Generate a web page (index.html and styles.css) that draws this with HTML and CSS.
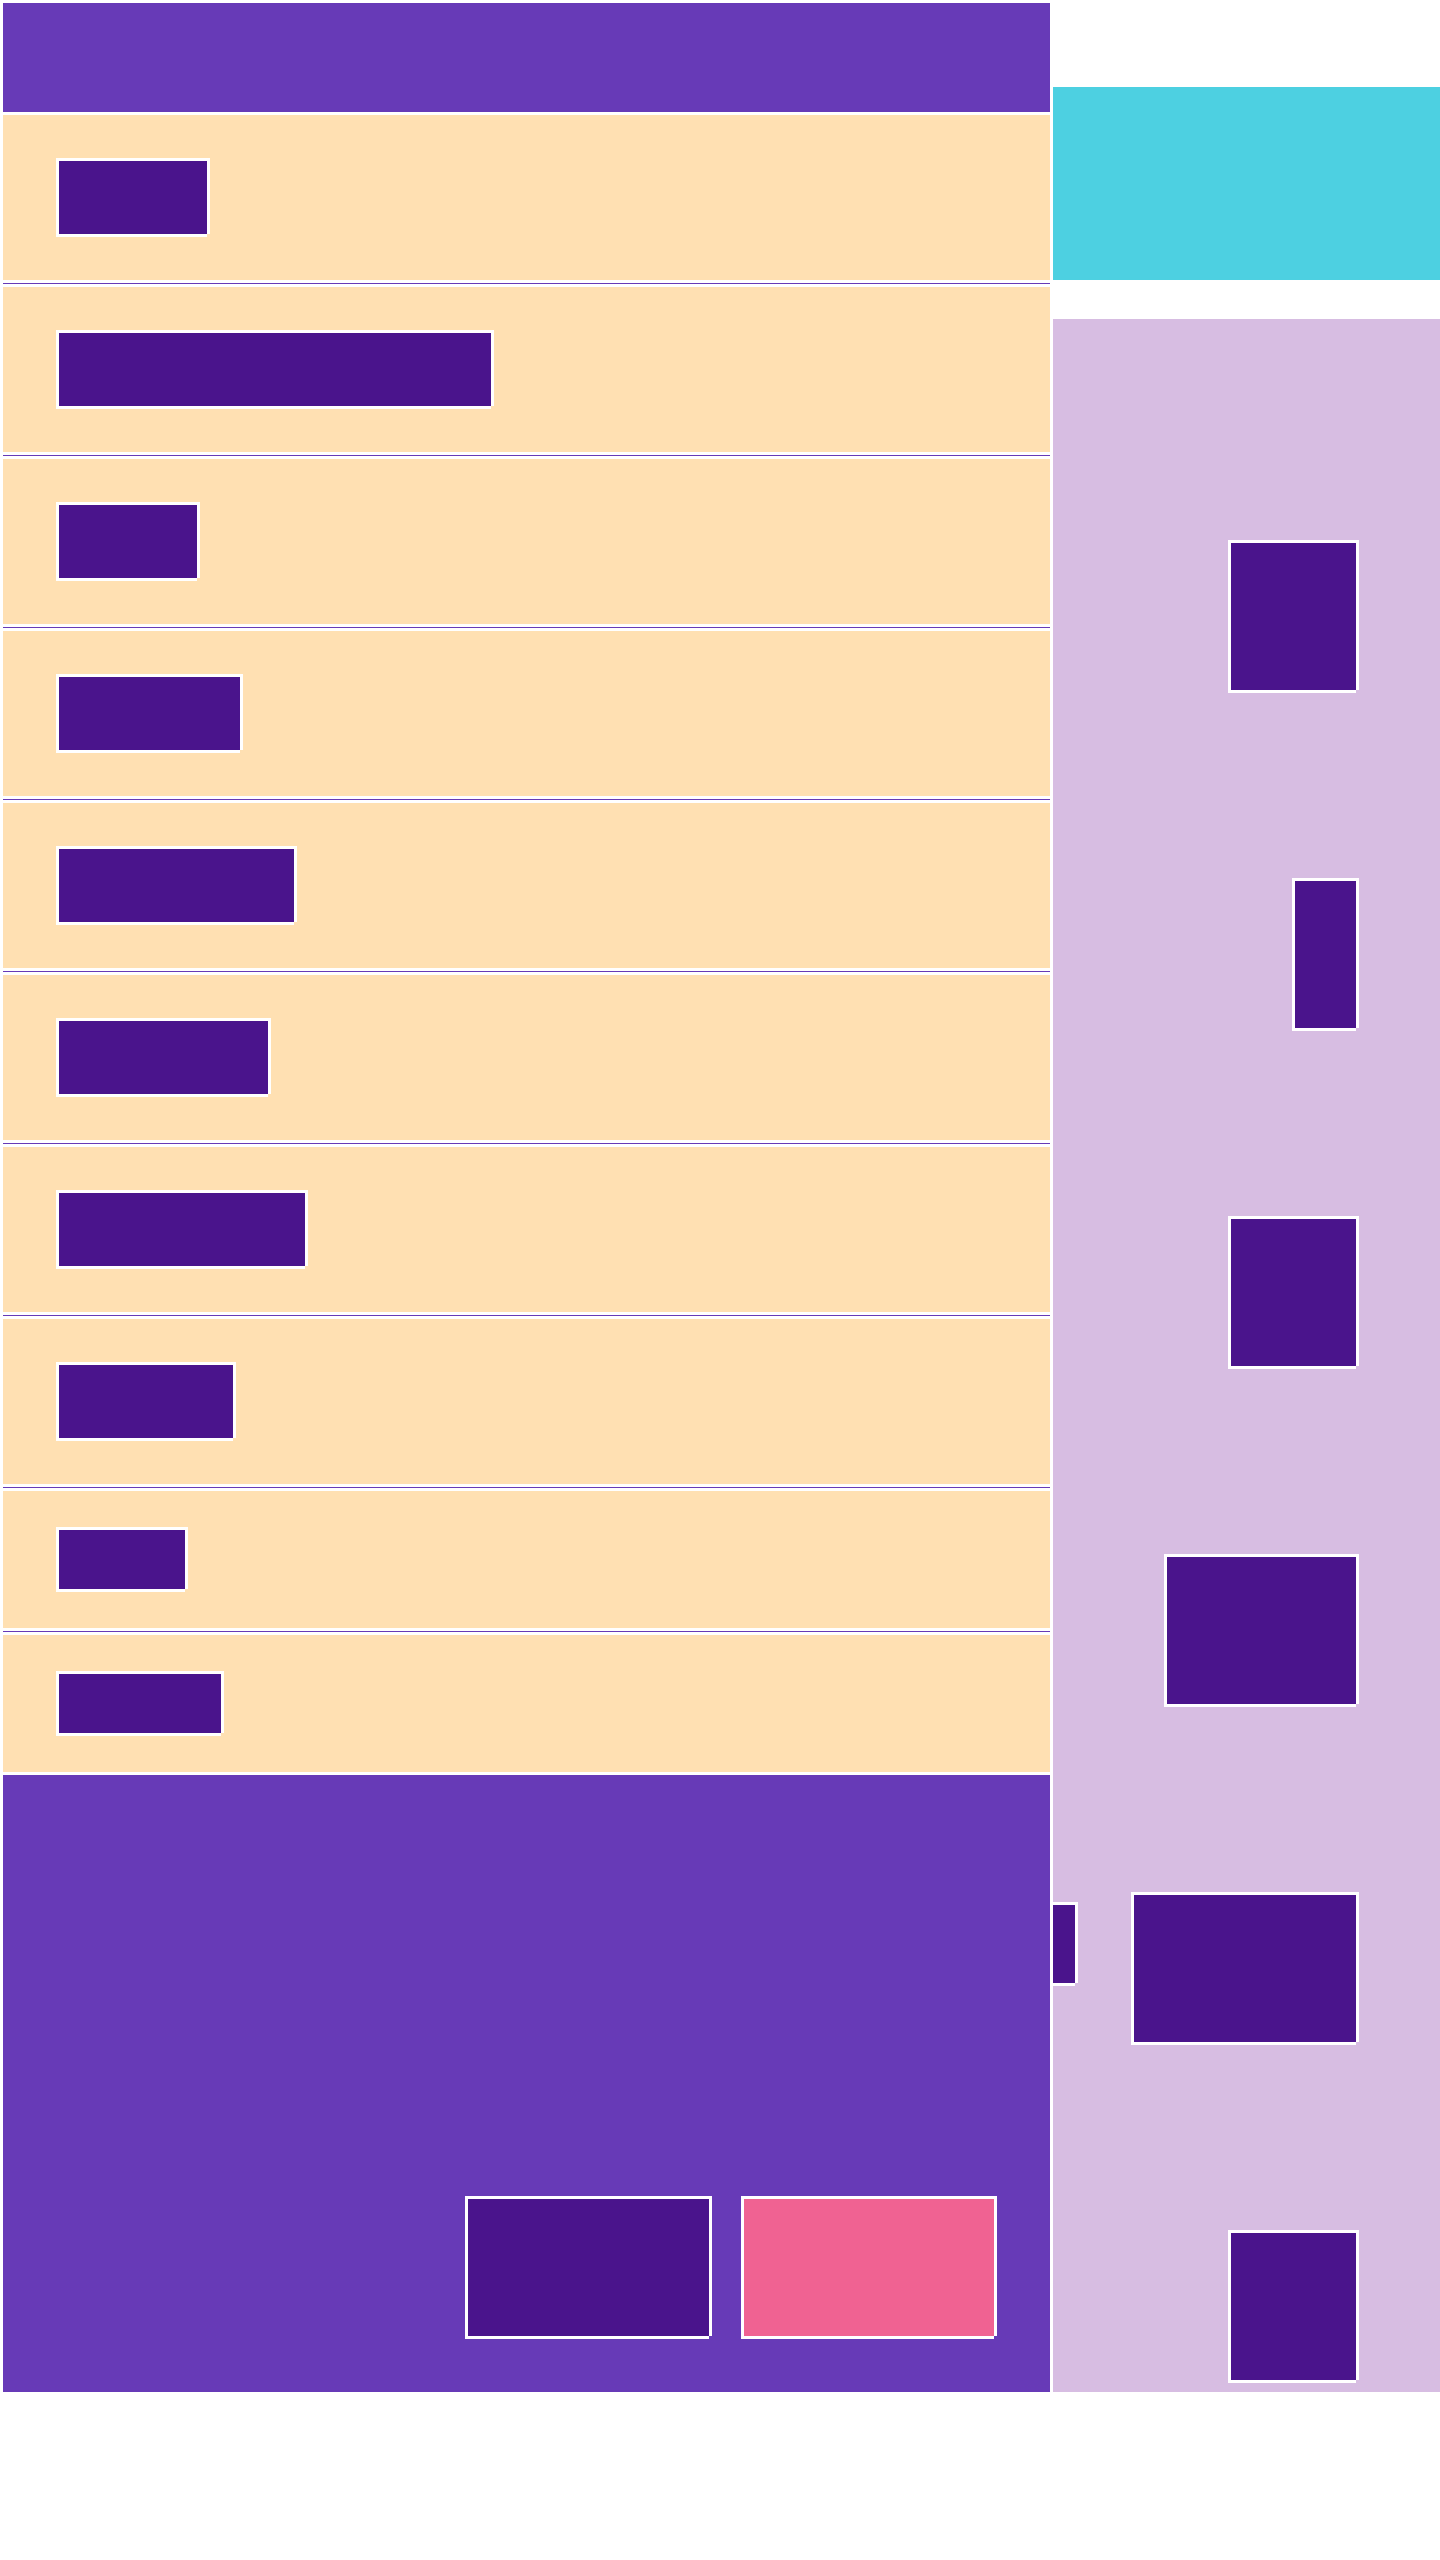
FILE: index.html
```html
<!DOCTYPE html>
<html>
<head>
<meta charset="UTF-8">
<title>Layout</title>
<link rel="stylesheet" href="styles.css">
</head>
<body>
	<div class="page">
		<div class="main">
			<div class="header"></div>

			<div class="row"><div class="blk" style="width: 148px"></div></div>
			<div class="sep"></div>
			<div class="row"><div class="blk" style="width: 432px"></div></div>
			<div class="sep"></div>
			<div class="row"><div class="blk" style="width: 138px"></div></div>
			<div class="sep"></div>
			<div class="row"><div class="blk" style="width: 181px"></div></div>
			<div class="sep"></div>
			<div class="row"><div class="blk" style="width: 235px"></div></div>
			<div class="sep"></div>
			<div class="row"><div class="blk" style="width: 209px"></div></div>
			<div class="sep"></div>
			<div class="row"><div class="blk" style="width: 246px"></div></div>
			<div class="sep"></div>
			<div class="row"><div class="blk" style="width: 174px"></div></div>
			<div class="sep"></div>
			<div class="row short"><div class="blk" style="width: 126px"></div></div>
			<div class="sep"></div>
			<div class="row short"><div class="blk" style="width: 162px"></div></div>

			<div class="footer">
				<div class="blk btn"></div>
				<div class="blk btn pink"></div>
			</div>
		</div>

		<div class="side">
			<div class="banner"></div>
			<div class="panel">
				<div class="blk tall" style="width: 125px"></div>
				<div class="blk tall" style="width: 61px"></div>
				<div class="blk tall" style="width: 125px"></div>
				<div class="blk tall" style="width: 189px"></div>
				<div class="panel-row">
					<div class="blk clip"></div>
					<div class="blk tall" style="width: 222px"></div>
				</div>
				<div class="blk tall" style="width: 125px"></div>
			</div>
		</div>
	</div>
</body>
</html>
```

FILE: styles.css
```css
* {
	padding: 0;
	margin: 0;
	box-sizing: border-box;
}

body {
	background-color: #fff;
	font-family: "Liberation Sans", Arial, sans-serif;
}

.page {
	display: grid;
	grid-template-columns: 1047px 387px;
	column-gap: 3px;
	padding: 3px 0 0 3px;
}

.main {
	display: flex;
	flex-direction: column;
	gap: 3px;
}

.header {
	height: 109px;
	background-color: #673ab7;
}

.row {
	background-color: #ffe0b2;
	padding: 43px 0 46px 53px;
}

.row .blk {
	height: 73px;
}

.row.short {
	padding: 36px 0 39px 53px;
}

.row.short .blk {
	height: 59px;
}

.sep {
	height: 1px;
	background-color: #673ab7;
}

/* dark box with the white frame, notched at bottom right */
.blk {
	background-color: #4a148c;
	border-top: 3px solid #fff;
	border-left: 3px solid #fff;
	box-shadow: 3px 0 0 #fff, 0 3px 0 #fff;
	box-sizing: content-box;
}

.footer {
	height: 617px;
	background-color: #673ab7;
	display: flex;
	justify-content: flex-end;
	align-items: flex-end;
	gap: 32px;
	padding: 0 56px 56px 0;
}

.btn {
	width: 241px;
	height: 137px;
}

.btn.pink {
	width: 250px;
	background-color: #f06292;
}

.side {
	display: flex;
	flex-direction: column;
}

.banner {
	margin-top: 84px;
	height: 193px;
	background-color: #4dd0e1;
}

.panel {
	margin-top: 39px;
	flex: 1;
	background-color: #d7bde2;
	display: flex;
	flex-direction: column;
	align-items: flex-end;
	gap: 188px;
	padding: 221px 84px 12px 0;
}

.tall {
	height: 147px;
}

.panel-row {
	align-self: stretch;
	display: flex;
	justify-content: space-between;
	align-items: flex-start;
}

.clip {
	border-left: 0;
	width: 22px;
	height: 78px;
	margin-top: 10px;
}
```
